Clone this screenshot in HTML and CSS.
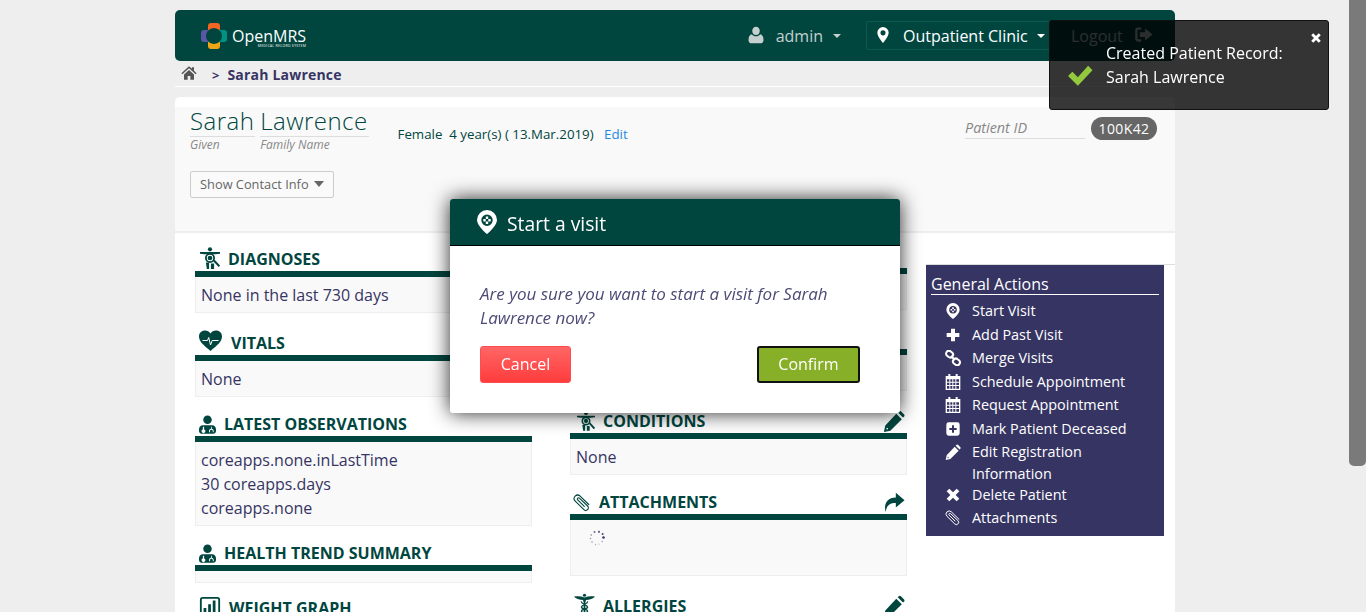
FILE: index.html
```html
<!DOCTYPE html>
<html lang="en">
<head>
<meta charset="utf-8">
<title>OpenMRS</title>
<link rel="stylesheet" href="styles.css">
</head>
<body>
<svg class="sprite" aria-hidden="true">
  <symbol id="i-user" viewBox="0 0 24 24"><path d="M12 1c3 0 5 2.500 5 5.500S15 12 12 12 7 9.500 7 6.500 9 1 12 1zM6.500 11c1.300 1.800 3.300 2.800 5.500 2.800s4.200-1 5.500-2.800c2.800.3 4.500 3 4.500 7.500 0 2.800-1.700 4.500-4 4.500H6c-2.300 0-4-1.700-4-4.500C2 14 3.700 11.300 6.500 11z"/></symbol>
  <symbol id="i-marker" viewBox="0 0 24 24"><path fill-rule="evenodd" d="M12 0a8.500 8.500 0 0 0-8.500 8.500C3.500 14 12 24 12 24s8.500-10 8.500-15.500A8.500 8.500 0 0 0 12 0zm0 5a3.800 3.800 0 1 1 0 7.600A3.800 3.800 0 0 1 12 5z"/></symbol>
  <symbol id="i-visit" viewBox="0 0 24 24"><path fill-rule="evenodd" d="M12 0a10 10 0 0 0-10 10c0 6 10 14 10 14s10-8 10-14A10 10 0 0 0 12 0zm0 4.500a5.700 5.700 0 1 1 0 11.400 5.700 5.700 0 0 1 0-11.400z"/><path d="M10.800 6.500h2.400v2.400h-2.400zM10.800 11.500h2.400v2.400h-2.400zM8.300 9h2.400v2.400H8.300zM13.300 9h2.400v2.400h-2.400z"/></symbol>
  <symbol id="i-home" viewBox="0 0 24 24"><path d="M12 2L.5 12.300 2 14l10-9 10 9 1.500-1.700-4-3.600V3.500h-3.200v2.300zM4.500 14.300V22H10v-5.500h4V22h5.500v-7.700L12 7.500z"/></symbol>
  <symbol id="i-signout" viewBox="0 0 24 24"><path d="M9 3H5a3.500 3.500 0 0 0-3.500 3.500v11A3.500 3.500 0 0 0 5 21h4v-3H5.500a1 1 0 0 1-1-1V7a1 1 0 0 1 1-1H9zM14 4.500L23.500 12 14 19.500V15H7.500V9H14z"/></symbol>
  <symbol id="i-x" viewBox="0 0 24 24"><path d="M6.500 2.500L12 8l5.500-5.500 4 4L16 12l5.500 5.500-4 4L12 16l-5.500 5.500-4-4L8 12 2.500 6.500z"/></symbol>
  <symbol id="i-check" viewBox="0 0 24 24"><path d="M1 13l4-4 5 5L19.500 3.500l4 4L10 22z"/></symbol>
  <symbol id="i-plus" viewBox="0 0 24 24"><path d="M9 2.500h6V9h6.500v6H15v6.500H9V15H2.500V9H9z"/></symbol>
  <symbol id="i-link" viewBox="0 0 24 24"><g fill="none" stroke="currentColor" stroke-width="3"><rect x="1.500" y="2" width="11" height="8.500" rx="4.200" transform="rotate(40 7 6)"/><rect x="11.500" y="13.500" width="11" height="8.500" rx="4.200" transform="rotate(40 17 18)"/><path d="M9 9l6 6"/></g></symbol>
  <symbol id="i-calendar" viewBox="0 0 24 24"><path fill-rule="evenodd" d="M5 0h3v3h8V0h3v3h4v21H1V3h4zM3 8v3.500h3.500V8zm5 0v3.500h3V8zm4.500 0v3.500h3V8zm4.500 0v3.500h4V8zM3 13v3.500h3.500V13zm5 0v3.500h3V13zm4.500 0v3.500h3V13zm4.500 0v3.500h4V13zM3 18v4h3.500v-4zm5 0v4h3v-4zm4.500 0v4h3v-4zm4.500 0v4h4v-4z"/></symbol>
  <symbol id="i-plussq" viewBox="0 0 24 24"><path fill-rule="evenodd" d="M5.500 2h13A3.500 3.500 0 0 1 22 5.500v13a3.500 3.500 0 0 1-3.500 3.500h-13A3.500 3.500 0 0 1 2 18.500v-13A3.500 3.500 0 0 1 5.500 2zM10.500 6.500V10.500h-4v3h4v4h3v-4h4v-3h-4v-4z"/></symbol>
  <symbol id="i-pencil" viewBox="0 0 24 24"><path fill-rule="evenodd" d="M14.500 4l6 6L8 22.500l-7 1.500 1.500-7zM4.500 18l-.8 3.300 1.800-.4-.2-1.300-1-.2z"/><path d="M16 2.500l1-1a2 2 0 0 1 2.800 0l3 3a2 2 0 0 1 0 2.800l-1 1z"/></symbol>
  <symbol id="i-clip" viewBox="0 0 24 24"><path fill="none" stroke="currentColor" stroke-width="1.500" stroke-linecap="round" d="M21 14L9.500 2.800A4.500 4.500 0 0 0 3 9.500L14.500 20.800A3.400 3.400 0 0 0 19.500 16L8.500 5.500A1.300 1.300 0 0 0 6.300 7.800L15 16.500"/></symbol>
  <symbol id="i-share" viewBox="0 0 24 24"><path d="M14 2l9.500 8L14 18v-5C7.500 13 4 15 3 23 .5 15 4 7 14 7z"/></symbol>
  <symbol id="i-heart" viewBox="0 0 24 24"><path fill-rule="evenodd" d="M12 22C5 16 .5 12.500.5 7.500.5 4 3 1.500 6.500 1.500c2.300 0 4.300 1.200 5.500 3 1.200-1.800 3.200-3 5.500-3 3.500 0 6 2.500 6 6 0 5-4.500 8.500-11.500 14.500z"/><path fill="none" stroke="#fff" stroke-width="1" d="M4 11.500h5l1.200-3 1.800 7.500 1.700-4.500H20"/></symbol>
  <symbol id="i-body" viewBox="1 0 22 24"><circle cx="12" cy="2.500" r="2.300"/><path d="M1 5.500h22v1.800l-5 .7H6l-5-.7z"/><path fill-rule="evenodd" d="M12 6.500a5.500 5.500 0 1 1 0 11 5.500 5.500 0 0 1 0-11zm0 2a3.500 3.500 0 1 0 0 7 3.500 3.500 0 0 0 0-7z"/><circle cx="12" cy="12" r="2.600"/><path d="M7.500 17h3.500v7H8.500l-1-7zM13 18h3.500v6H13z"/><path d="M15.500 15.500l1.600-1.600 6 6.500-1.600 1.600z"/></symbol>
  <symbol id="i-doctor" viewBox="1 0 22 24"><circle cx="12" cy="6" r="5.500"/><path fill-rule="evenodd" d="M6 13h12c3 0 5 2.500 5 5.500v2c0 2-1.500 3.500-3.500 3.500h-15C2.500 24 1 22.500 1 20.500v-2C1 15.500 3 13 6 13zm0 2v3.500a2.300 2.300 0 1 0 1.600 0V15zm10.500 0v2.500c-1.500 0-2.500 1.200-2.500 3V22h1.300v-1.500c0-1 .5-1.700 1.500-1.700s2 .7 2 1.700V22h1.200v-1.500c0-1.700-1-3-2.500-3V15z"/></symbol>
  <symbol id="i-chart" viewBox="0 0 24 24"><path fill-rule="evenodd" d="M4 1h16a3 3 0 0 1 3 3v16a3 3 0 0 1-3 3H4a3 3 0 0 1-3-3V4a3 3 0 0 1 3-3zm0 2a1 1 0 0 0-1 1v16a1 1 0 0 0 1 1h16a1 1 0 0 0 1-1V4a1 1 0 0 0-1-1z"/><path d="M5 13h3v6H5zM10 9h3v10h-3zM15 5h3v14h-3z"/></symbol>
  <symbol id="i-caduceus" viewBox="0 0 24 24"><path d="M0 3.500C4 3 8 3 12 4.500 16 3 20 3 24 3.500c-2 2.500-6 4-10.500 4v1.500h-3V7.500C6 7.500 2 6 0 3.500z"/><circle cx="12" cy="2" r="1.800"/><path d="M11 8h2v16h-2z"/><path fill="none" stroke="currentColor" stroke-width="1.500" d="M15.500 9c1 3-7 3.500-7 6.500s7 2 7 4.500-4 2-5 3M8.500 9c-1 3 7 3.500 7 6.500s-7 2-7 4.500 4 2 5 3"/></symbol>
  <symbol id="i-spin" viewBox="0 0 16 16"><circle cx="10" cy="1.800" r="1.100" opacity=".8"/><circle cx="13.600" cy="4" r="1" opacity=".9"/><circle cx="14.500" cy="7.500" r="1.300"/><circle cx="13.200" cy="11.500" r=".7" opacity=".5"/><circle cx="10" cy="14" r=".6" opacity=".4"/><circle cx="6.500" cy="14.500" r=".7" opacity=".4"/><circle cx="3" cy="12" r=".8" opacity=".5"/><circle cx="1.500" cy="8.500" r=".8" opacity=".5"/><circle cx="2.200" cy="5" r=".8" opacity=".6"/><circle cx="5.500" cy="2" r="1" opacity=".7"/></symbol>
</svg>

<div class="page">
  <header class="topbar">
    <div class="logo">
      <svg class="logo-mark" viewBox="0 0 26 26" aria-hidden="true">
        <path fill="#f26522" d="M7 3a3 3 0 0 1 3-3h6a3 3 0 0 1 3 3v4.500A8.500 8.500 0 0 0 13 5a8.500 8.500 0 0 0-6 2.500z"/>
        <path fill="#5b57a6" d="M3 7h4.500A8.500 8.500 0 0 0 5 13a8.500 8.500 0 0 0 2.500 6H3a3 3 0 0 1-3-3v-6a3 3 0 0 1 3-3z"/>
        <path fill="#009384" d="M18.500 7H23a3 3 0 0 1 3 3v6a3 3 0 0 1-3 3h-4.500A8.500 8.500 0 0 0 21 13a8.500 8.500 0 0 0-2.500-6z"/>
        <path fill="#eea616" d="M7 18.500A8.500 8.500 0 0 0 13 21a8.500 8.500 0 0 0 6-2.500V23a3 3 0 0 1-3 3h-6a3 3 0 0 1-3-3z"/>
      </svg>
      <div class="logo-text">
        <span class="logo-name">OpenMRS</span>
        <span class="logo-sub">MEDICAL RECORD SYSTEM</span>
      </div>
    </div>
    <div class="nav">
      <div class="nav-user">
        <svg class="ic ic-user"><use href="#i-user"/></svg>
        <span>admin</span>
        <i class="caret"></i>
      </div>
      <div class="nav-loc">
        <svg class="ic ic-marker"><use href="#i-marker"/></svg>
        <span>Outpatient Clinic</span>
        <i class="caret caret-white"></i>
      </div>
      <div class="nav-logout">
        <span>Logout</span>
        <svg class="ic ic-signout"><use href="#i-signout"/></svg>
      </div>
    </div>
  </header>

  <nav class="crumbs">
    <svg class="ic ic-home"><use href="#i-home"/></svg>
    <span class="chev">&gt;</span>
    <span class="crumb-name">Sarah Lawrence</span>
  </nav>

  <main class="panel">
    <section class="patient">
      <div class="patient-row">
        <div class="names">
          <div class="name-part name-given"><span class="name-big">Sarah</span><em>Given</em></div>
          <div class="name-part"><span class="name-big">Lawrence</span><em>Family Name</em></div>
        </div>
        <div class="demo">Female&nbsp; 4 year(s) ( 13.Mar.2019) <a class="edit">Edit</a></div>
        <div class="pid">
          <em class="pid-label">Patient ID</em>
          <span class="pid-badge">100K42</span>
        </div>
      </div>
      <button class="contact">Show Contact Info <i class="caret caret-gray"></i></button>
    </section>

    <div class="dash">
      <div class="col col-left">
        <section class="box">
          <h3 class="box-h"><svg class="ic ic-body"><use href="#i-body"/></svg>DIAGNOSES</h3>
          <div class="box-b">None in the last 730 days</div>
        </section>
        <section class="box mt19">
          <h3 class="box-h"><svg class="ic ic-heart"><use href="#i-heart"/></svg>VITALS</h3>
          <div class="box-b">None</div>
        </section>
        <section class="box mt16">
          <h3 class="box-h"><svg class="ic ic-doctor"><use href="#i-doctor"/></svg>LATEST OBSERVATIONS</h3>
          <div class="box-b">coreapps.none.inLastTime<br>30 coreapps.days<br>coreapps.none</div>
        </section>
        <section class="box mt16">
          <h3 class="box-h"><svg class="ic ic-doctor"><use href="#i-doctor"/></svg>HEALTH TREND SUMMARY</h3>
          <div class="box-b box-empty"></div>
        </section>
        <section class="box mt14">
          <h3 class="box-h"><svg class="ic ic-chart"><use href="#i-chart"/></svg>WEIGHT GRAPH</h3>
          <div class="box-b box-empty"></div>
        </section>
      </div>

      <div class="col col-mid">
        <section class="box">
          <h3 class="box-h"></h3>
          <div class="box-b"></div>
        </section>
        <section class="box mt16">
          <h3 class="box-h"></h3>
          <div class="box-b"></div>
        </section>
        <section class="box mt19">
          <h3 class="box-h"><svg class="ic ic-body-s"><use href="#i-body"/></svg>CONDITIONS<svg class="ic ic-act"><use href="#i-pencil"/></svg></h3>
          <div class="box-b">None</div>
        </section>
        <section class="box mt16">
          <h3 class="box-h"><svg class="ic ic-clip"><use href="#i-clip"/></svg>ATTACHMENTS<svg class="ic ic-act"><use href="#i-share"/></svg></h3>
          <div class="box-b box-load"><svg class="ic ic-spin"><use href="#i-spin"/></svg></div>
        </section>
        <section class="box mt19">
          <h3 class="box-h"><svg class="ic ic-cad"><use href="#i-caduceus"/></svg>ALLERGIES<svg class="ic ic-act"><use href="#i-pencil"/></svg></h3>
          <div class="box-b box-empty"></div>
        </section>
      </div>

      <aside class="col col-right">
        <div class="actions">
          <h3 class="actions-h">General Actions</h3>
          <ul class="actions-list">
            <li><svg class="ic"><use href="#i-visit"/></svg><span>Start Visit</span></li>
            <li><svg class="ic"><use href="#i-plus"/></svg><span>Add Past Visit</span></li>
            <li><svg class="ic"><use href="#i-link"/></svg><span>Merge Visits</span></li>
            <li><svg class="ic"><use href="#i-calendar"/></svg><span>Schedule Appointment</span></li>
            <li><svg class="ic"><use href="#i-calendar"/></svg><span>Request Appointment</span></li>
            <li><svg class="ic"><use href="#i-plussq"/></svg><span>Mark Patient Deceased</span></li>
            <li class="item-wrap"><svg class="ic"><use href="#i-pencil"/></svg><span>Edit Registration Information</span></li>
            <li><svg class="ic"><use href="#i-x"/></svg><span>Delete Patient</span></li>
            <li><svg class="ic"><use href="#i-clip"/></svg><span>Attachments</span></li>
          </ul>
        </div>
      </aside>
    </div>
  </main>
</div>

<div class="dialog">
  <div class="dialog-h"><svg class="ic ic-visit"><use href="#i-visit"/></svg><span class="dialog-title">Start a visit</span></div>
  <div class="dialog-b">
    <p class="dialog-text">Are you sure you want to start a visit for Sarah Lawrence now?</p>
    <div class="dialog-btns">
      <button class="btn btn-cancel">Cancel</button>
      <button class="btn btn-confirm">Confirm</button>
    </div>
  </div>
</div>

<div class="toast">
  <svg class="ic toast-x"><use href="#i-x"/></svg>
  <svg class="ic toast-check"><use href="#i-check"/></svg>
  <div class="toast-text">Created Patient Record:<br>Sarah Lawrence</div>
</div>

<div class="scroll-thumb"></div>
</body>
</html>
```

FILE: styles.css
```css
* { box-sizing: border-box; }
html, body { margin: 0; height: 100%; overflow: hidden; }
body {
  background: #eee;
  font-family: "Open Sans", sans-serif;
  font-size: 16px;
  line-height: 24px;
  color: #363463;
}
.sprite { display: none; }
.ic { display: block; fill: currentColor; flex: none; }

.page { width: 1000px; margin-left: 175px; padding-top: 10px; }

/* top bar */
.topbar {
  height: 51px;
  background: #00463f;
  border-radius: 5px;
  display: flex;
  align-items: center;
  padding-left: 26px;
}
.logo { display: flex; align-items: center; gap: 5px; }
.logo-mark { width: 26px; height: 26px; display: block; }
.logo-text { display: flex; flex-direction: column; color: #fff; padding-top: 6px; }
.logo-name { font-size: 16px; line-height: 14px; font-weight: 400; }
.logo-sub { font-size: 3.500px; line-height: 5px; letter-spacing: .2px; text-align: right; color: #cfdcda; font-weight: 600; }
.nav { margin-left: auto; display: flex; align-items: center; }
.nav-user { display: flex; align-items: center; color: #c5d0ce; margin-right: 25px; }
.ic-user { width: 18px; height: 18px; margin: -2px 11px 0 -1px; color: #c5cfcd; }
.nav-user .caret { margin-left: 10px; }
.caret { display: block; width: 0; height: 0; border: 4px solid transparent; border-top: 4px solid #c5d0ce; border-bottom: 0; }
.caret-white { border-top-color: #fff; }
.caret-gray { display: inline-block; border: 5px solid transparent; border-top: 6px solid #666; border-bottom: 0; vertical-align: 2px; margin-left: 2px; }
.nav-loc {
  display: flex; align-items: center;
  height: 29px; width: 184px;
  border: 1px solid #0b5a51;
  border-radius: 2px;
  color: #fff;
  padding-left: 8px;
  margin-right: 21px;
}
.ic-marker { width: 16px; height: 18px; margin: -2px 12px 0 0; }
.nav-loc .caret { margin-left: 9px; }
.nav-logout { display: flex; align-items: center; color: #c5d0ce; width: 104px; }
.ic-signout { width: 19px; height: 19px; margin: -3px 0 0 11px; }

/* breadcrumb */
.crumbs {
  height: 26px;
  display: flex; align-items: center;
  border-bottom: 1px solid #fff;
  padding: 3px 0 0 6px;
}
.ic-home { width: 16px; height: 16px; color: #555; margin-top: -5px; }
.chev { font-weight: 700; margin-left: 15px; font-size: 13px; }
.crumb-name { font-weight: 700; margin-left: 8px; letter-spacing: .2px; font-size: 14px; }

/* panel */
.panel { background: #fff; margin-top: 10px; padding-top: 10px; border-radius: 5px 5px 0 0; height: 520px; }
.patient {
  height: 126px;
  background: #f9f9f9;
  border-bottom: 2px solid #eee;
  padding: 0 15px;
}
.patient-row { display: flex; align-items: flex-start; }
.names { display: flex; gap: 5px; }
.name-part { display: flex; flex-direction: column; }
.name-big {
  font-size: 24px; line-height: 27px; color: #00463f;
  font-weight: 300; letter-spacing: .45px;
  border-bottom: 1px solid #ddd;
  padding: 0 1px 2px 0;
}
.name-part em { font-size: 12px; line-height: 16px; color: #888; }
.demo { font-size: 13.300px; line-height: 18px; margin: 18px 0 0 29px; color: #00463f; white-space: pre-wrap; }
.edit { color: #1e88e5; margin-left: 7px; }
.pid { margin-left: auto; display: flex; align-items: flex-start; margin-top: 10px; }
.pid-label {
  width: 120px; height: 22px; display: block;
  font-size: 14.400px; line-height: 21px; color: #888;
  border-bottom: 1px solid #ddd;
}
.pid-badge {
  margin: 0 3px 0 6px;
  height: 23px; width: 66px; border-radius: 12px;
  background: #666; color: #fff;
  font-size: 14px; line-height: 23px; text-align: center; letter-spacing: .4px;
}
.contact {
  display: block;
  margin-top: 18px;
  height: 27px; width: 144px; padding: 0;
  background: #fafafa;
  border: 1px solid #ccc; border-radius: 2px;
  font: 400 12.800px/25px "Open Sans", sans-serif;
  color: #666;
}

/* dashboard */
.dash { display: flex; align-items: flex-start; }
.col { flex: none; }
.col-left { width: 337px; margin-left: 20px; padding-top: 15px; }
.col-mid { width: 337px; margin-left: 38px; padding-top: 12px; }
.col-right { width: 249px; margin-left: 19px; margin-top: 31px; border-top: 1px solid #ddd; }
.mt14 { margin-top: 14px; }
.mt16 { margin-top: 16px; }
.mt19 { margin-top: 19px; }
.box-h {
  box-sizing: content-box;
  height: 22px; margin: 0;
  display: flex; align-items: flex-end; gap: 8px;
  font-size: 16px; line-height: 22px; font-weight: 700;
  color: #00463f;
  padding-bottom: 1px;
  border-bottom: 6px solid #00463f;
}
.box-b {
  background: #f9f9f9;
  border: 1px solid #eee; border-top: 0;
  padding: 6px 5px 5px;
  line-height: 24px;
  min-height: 36px;
}
.box-empty { min-height: 12px; padding: 0; height: 12px; }
.box-load { height: 56px; padding: 10px 0 0 18px; }
.box-h .ic { margin-bottom: 1px; }
.ic-body { width: 20px; height: 22px; margin-left: 5px; }
.ic-heart { width: 25px; height: 24px; margin-left: 3px; }
.ic-doctor { width: 17px; height: 19px; margin-left: 4px; }
.ic-chart { width: 22px; height: 22px; margin-left: 4px; }
.ic-body-s { width: 18px; height: 20px; margin-left: 7px; }
.ic-clip { width: 18px; height: 18px; margin-left: 3px; }
.ic-cad { width: 21px; height: 24px; margin-left: 4px; }
.box-h .ic-act { width: 22px; height: 22px; margin-left: auto; margin-right: 2px; margin-bottom: 0; }
.ic-spin { width: 16px; height: 16px; }

/* actions */
.actions { width: 238px; height: 271px; background: #363463; color: #fff; padding: 8px 5px 0; }
.actions-h {
  margin: 0; font-weight: 400; font-size: 16px; line-height: 22px;
  border-bottom: 1px solid #fff;
  height: 22px;
}
.actions-list { list-style: none; margin: 5px 0 0; padding: 0; display: flex; flex-direction: column; gap: 1.500px; }
.actions-list li { display: flex; font-size: 14.400px; line-height: 22px; padding-left: 41px; position: relative; width: 205px; }
.actions-list .item-wrap { margin-bottom: -2.800px; }
.actions-list .ic { position: absolute; left: 14px; top: 3px; width: 16px; height: 16px; }

/* dialog */
.dialog {
  position: fixed; left: 450px; top: 199px;
  width: 450px; height: 214px;
  background: #fff;
  border-radius: 3px;
  box-shadow: 0 0 20px rgba(0, 0, 0, .85);
}
.dialog-h {
  height: 47px;
  background: #00463f;
  border-bottom: 1px solid #000;
  border-radius: 3px 3px 0 0;
  color: #fff;
  display: flex; align-items: center;
  padding-left: 25px;
  font-size: 19.300px;
}
.ic-visit { width: 24px; height: 24px; margin: -1px 8px 0 0; }
.dialog-title { margin-top: 4px; }
.dialog-b { padding: 36px 30px 0; }
.dialog-text { margin: 0; font-style: italic; font-size: 17px; line-height: 24px; color: #4c4a76; }
.dialog-btns { display: flex; justify-content: space-between; margin-top: 16px; padding-right: 10px; }
.btn { height: 37px; padding: 0 0 2px; font: 400 16px/24px "Open Sans", sans-serif; color: #fff; border-radius: 3px; }
.btn-cancel { width: 91px; background: linear-gradient(#ff6666, #ff3c3c); border: 1px solid #ff4d4d; }
.btn-confirm { width: 103px; background: #88af28; border: 2px solid #111; }

/* toast */
.toast {
  position: fixed; left: 1049px; top: 20px;
  width: 280px; height: 90px;
  background: rgba(0, 0, 0, .78);
  border: 1px solid #111;
  border-radius: 3px;
  color: #fff;
}
.toast-x { position: absolute; left: 260px; top: 11px; width: 12px; height: 12px; }
.toast-check { position: absolute; left: 17px; top: 41px; width: 26px; height: 26px; color: #95c93d; }
.toast-text { position: absolute; left: 56px; top: 20px; line-height: 24px; width: 210px; }

.scroll-thumb {
  position: fixed; right: 0; top: 0;
  width: 17px; height: 466px;
  background: #7a7a7a;
  border-radius: 0 0 5px 5px;
}
```
